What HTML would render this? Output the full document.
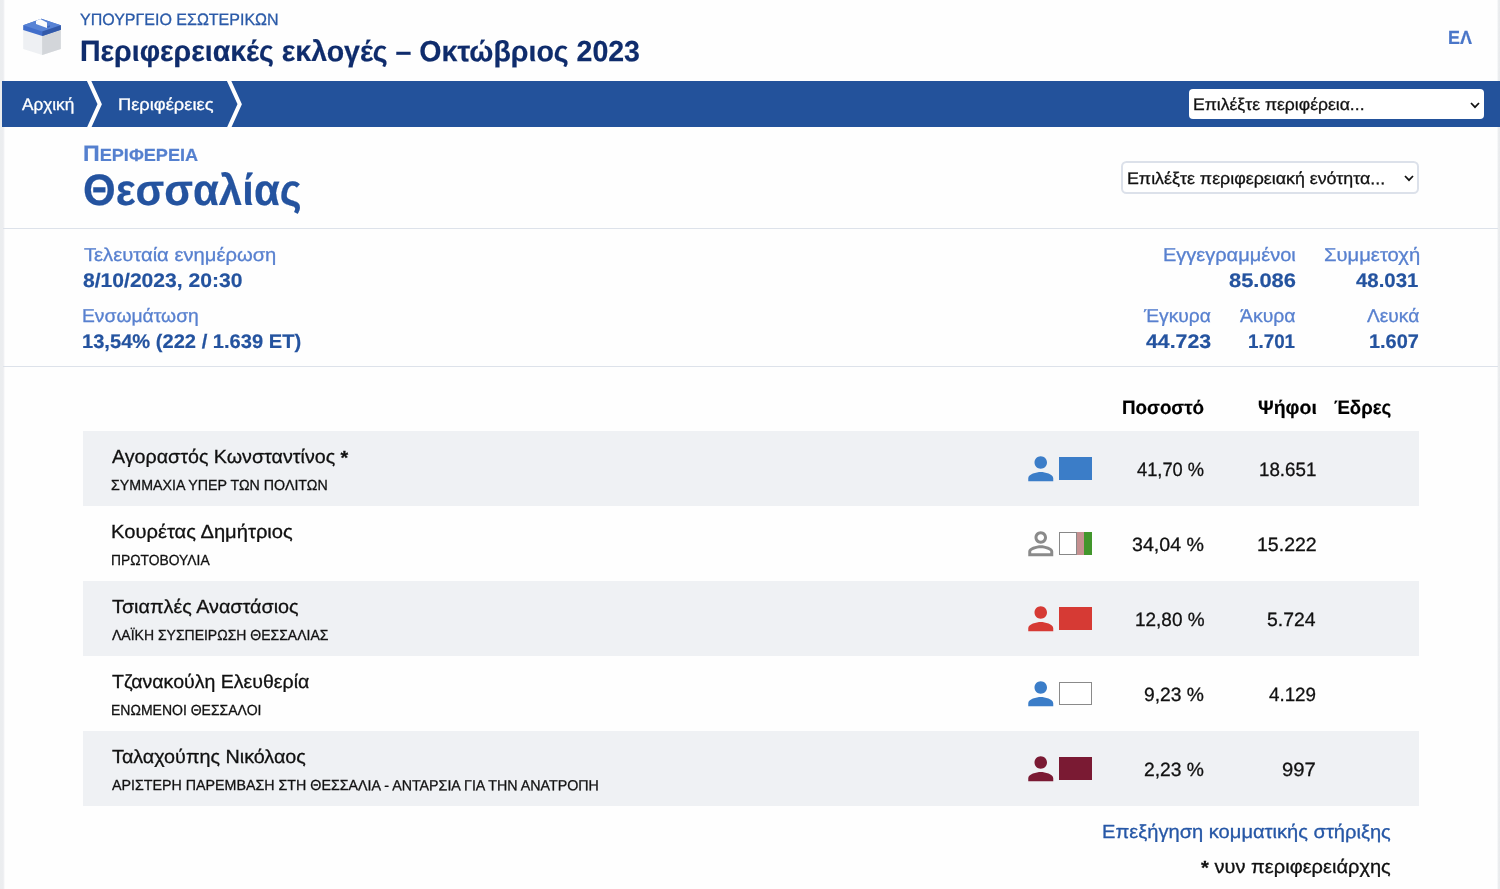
<!DOCTYPE html>
<html lang="el">
<head>
<meta charset="utf-8">
<title>Περιφερειακές εκλογές – Οκτώβριος 2023</title>
<style>
*{box-sizing:border-box;margin:0;padding:0}
html,body{width:1500px;height:889px;overflow:hidden;background:#fefefe}
body{font-family:"Liberation Sans",sans-serif;color:#111;position:relative}
.t{position:absolute;white-space:nowrap;line-height:1;transform-origin:0 0}
.t{-webkit-text-stroke:0.3px currentColor}
.b{font-weight:bold;-webkit-text-stroke:0.2px currentColor}
.edgeL{position:absolute;left:0;top:0;width:5px;height:889px;background:linear-gradient(90deg,#ebedef 0,#ecedf0 3.200px,#fefefe 5px)}
.edgeR{position:absolute;left:1497px;top:0;width:3px;height:889px;background:linear-gradient(90deg,#fefefe 0,#eceef0 1.200px,#e8eaec 3px)}
.nav{position:absolute;left:2px;top:80.500px;width:1498px;height:46.500px;background:#23529b;overflow:hidden}
.sel{position:absolute;background:#fff;border-radius:4px}
.stats{position:absolute;left:3px;top:228px;width:1495px;height:139px;border-top:1px solid #dde2ea;border-bottom:1px solid #dde2ea}
.row{position:absolute;left:83px;width:1336px;height:75px;background:#eff1f4}
.ic{position:absolute;left:1022px;width:37.5px;height:37.5px}
.bx{position:absolute;left:1059.3px;width:33.1px;height:23px}
</style>
</head>
<body>
<div class="edgeL"></div><div class="edgeR"></div>
<svg style="position:absolute;left:20px;top:15px" width="44" height="44" viewBox="20 15 44 44">
<polygon points="23.2,27 60.8,27 60.8,49.100 42.3,55 23.2,48.9" fill="#eef0f3"/>
<polygon points="42.1,33 60.8,27 60.8,49.100 42.3,55 42.1,55" fill="#d3d6da"/>
<polygon points="23.2,25.2 41.4,18.8 60.8,25.2 60.8,29.8 42.3,35.9 23.2,29.9" fill="#416ecb"/>
<polygon points="23.2,25.2 41.4,18.8 60.8,25.2 42.3,31.6" fill="#5883d5"/>
<polygon points="42.3,31.6 60.8,25.2 60.8,29.8 42.3,35.9" fill="#3259a9"/>
<polygon points="47,26.2 50,25.3 50,27 47.5,28" fill="#3c66bd"/>
<polygon points="36,20.8 40.2,19 47,22.6 47,28 36,24" fill="#fbfbfc"/>
</svg>
<div class="nav">
<svg style="position:absolute;left:0;top:0" width="300" height="47" viewBox="0 0 300 47">
<polyline points="86,-2.500 97.7,23.200 86,49" fill="none" stroke="#fefefe" stroke-width="4"/>
<polyline points="226,-2.500 237.7,23.200 226,49" fill="none" stroke="#fefefe" stroke-width="4"/>
</svg>
<div class="sel" style="left:1187px;top:8.500px;width:295px;height:30px">
<svg style="position:absolute;left:281px;top:12.500px" width="10" height="7" viewBox="0 0 10 7"><polyline points="1,1 5,5.2 9,1" fill="none" stroke="#111" stroke-width="1.7"/></svg>
</div>
</div>
<div class="sel" style="left:1121px;top:161px;width:298px;height:33.400px;border:2px solid #dce1ea;border-radius:5.500px">
<svg style="position:absolute;left:280.500px;top:12px" width="10" height="7" viewBox="0 0 10 7"><polyline points="1,1 5,5.2 9,1" fill="none" stroke="#111" stroke-width="1.7"/></svg>
</div>
<div class="stats"></div>
<div class="row" style="top:431px"></div>
<svg class="ic" style="top:449.5px" viewBox="0 0 24 24"><path fill="#3b7dc8" d="M12 12c2.21 0 4-1.79 4-4s-1.79-4-4-4-4 1.79-4 4 1.790 4 4 4zm0 2c-2.670 0-8 1.340-8 4v2h16v-2c0-2.660-5.330-4-8-4z"/></svg>
<div class="bx" style="top:457px;background:#3b7dc8"></div>
<div class="row" style="top:506px;background:transparent"></div>
<svg class="ic" style="top:524.5px" viewBox="0 0 24 24"><path fill="#8a8a8a" d="M12 5.900c1.160 0 2.100.940 2.100 2.100s-.940 2.100-2.100 2.100S9.900 9.160 9.900 8s.940-2.100 2.100-2.100m0 9c2.970 0 6.100 1.460 6.100 2.100v1.100H5.900V17c0-.640 3.130-2.100 6.100-2.100M12 4C9.790 4 8 5.790 8 8s1.790 4 4 4 4-1.790 4-4-1.790-4-4-4zm0 9c-2.670 0-8 1.340-8 4v3h16v-3c0-2.660-5.330-4-8-4z"/></svg>
<div class="bx" style="top:532px;background:linear-gradient(90deg,#fff 0 17.200px,#c59090 17.200px 25px,#42962c 25px 33px)"><div style="position:absolute;left:0;top:0;width:17.700px;height:23px;border:1px solid #888"></div></div>
<div class="row" style="top:581px"></div>
<svg class="ic" style="top:599.5px" viewBox="0 0 24 24"><path fill="#d63a34" d="M12 12c2.21 0 4-1.79 4-4s-1.79-4-4-4-4 1.79-4 4 1.790 4 4 4zm0 2c-2.670 0-8 1.340-8 4v2h16v-2c0-2.660-5.330-4-8-4z"/></svg>
<div class="bx" style="top:607px;background:#d63a34"></div>
<div class="row" style="top:656px;background:transparent"></div>
<svg class="ic" style="top:674.5px" viewBox="0 0 24 24"><path fill="#3b7dc8" d="M12 12c2.21 0 4-1.79 4-4s-1.79-4-4-4-4 1.79-4 4 1.790 4 4 4zm0 2c-2.670 0-8 1.340-8 4v2h16v-2c0-2.660-5.330-4-8-4z"/></svg>
<div class="bx" style="top:682px;background:#fff;border:1px solid #8a8a8a"></div>
<div class="row" style="top:731px"></div>
<svg class="ic" style="top:749.5px" viewBox="0 0 24 24"><path fill="#7a1a33" d="M12 12c2.21 0 4-1.79 4-4s-1.79-4-4-4-4 1.79-4 4 1.790 4 4 4zm0 2c-2.670 0-8 1.340-8 4v2h16v-2c0-2.660-5.330-4-8-4z"/></svg>
<div class="bx" style="top:757px;background:#7a1a33"></div>
<div style="position:absolute;left:0;top:0;width:1500px;height:889px;will-change:transform">
<div class="t" id="t1" style="left:80.28px;top:11.4px;font-size:16.5px;color:#2a5aa8;transform:rotate(0.03deg) scaleX(0.9698)">ΥΠΟΥΡΓΕΙΟ ΕΣΩΤΕΡΙΚΩΝ</div>
<div class="t b" id="t2" style="left:79.85px;top:35.5px;font-size:29.3px;color:#0f2c6c;transform:rotate(0.03deg) scaleX(0.9732)">Περιφερειακές εκλογές – Οκτώβριος 2023</div>
<div class="t b" id="t3" style="left:1448.14px;top:28.1px;font-size:19px;color:#4a76c8;transform:rotate(0.03deg) scaleX(0.9465)">ΕΛ</div>
<div class="t" id="n1" style="left:21.9px;top:97.0px;font-size:16.8px;color:#fff;transform:rotate(0.03deg) scaleX(1.024)">Αρχική</div>
<div class="t" id="n2" style="left:117.95px;top:97.0px;font-size:16.8px;color:#fff;transform:rotate(0.03deg) scaleX(1.0903)">Περιφέρειες</div>
<div class="t" id="s1" style="left:1193.3px;top:97.3px;font-size:16.8px;color:#111;transform:rotate(0.03deg) scaleX(1.0472)">Επιλέξτε περιφέρεια...</div>
<div class="t" id="s2" style="left:1126.78px;top:170.8px;font-size:16.8px;color:#111;transform:rotate(0.03deg) scaleX(1.0614)">Επιλέξτε περιφερειακή ενότητα...</div>
<div class="t b" id="r1" style="left:82.82px;top:142.8px;font-size:22.3px;color:#5580cf;transform:rotate(0.03deg) scaleX(1.0354)">Π<span style="font-size:17.5px">ΕΡΙΦΕΡΕΙΑ</span></div>
<div class="t b" id="r2" style="left:82.81px;top:168.4px;font-size:44px;color:#24539f;transform:rotate(0.03deg) scaleX(0.9545)">Θεσσαλίας</div>
<div class="t" id="a1" style="left:83.54px;top:245.8px;font-size:18.7px;color:#5880cf;transform:rotate(0.03deg) scaleX(1.0809)">Τελευταία ενημέρωση</div>
<div class="t b" id="a2" style="left:82.99px;top:270.6px;font-size:19.7px;color:#24539f;transform:rotate(0.03deg) scaleX(1.071)">8/10/2023, 20:30</div>
<div class="t" id="a3" style="left:82.18px;top:307.0px;font-size:18.7px;color:#5880cf;transform:rotate(0.03deg) scaleX(1.0323)">Ενσωμάτωση</div>
<div class="t b" id="a4" style="left:82.34px;top:332.4px;font-size:19.7px;color:#24539f;transform:rotate(0.03deg) scaleX(1.0217)">13,54% (222 / 1.639 ΕΤ)</div>
<div class="t" id="b1" style="left:1162.82px;top:245.8px;font-size:18.7px;color:#5880cf;transform:rotate(0.03deg) scaleX(1.0701)">Εγγεγραμμένοι</div>
<div class="t b" id="b2" style="left:1228.86px;top:270.6px;font-size:19.7px;color:#24539f;transform:rotate(0.03deg) scaleX(1.1114)">85.086</div>
<div class="t" id="b3" style="left:1323.52px;top:245.8px;font-size:18.7px;color:#5880cf;transform:rotate(0.03deg) scaleX(1.0823)">Συμμετοχή</div>
<div class="t b" id="b4" style="left:1356.45px;top:270.6px;font-size:19.7px;color:#24539f;transform:rotate(0.03deg) scaleX(1.0365)">48.031</div>
<div class="t" id="b5" style="left:1144.2px;top:307.0px;font-size:18.7px;color:#5880cf;transform:rotate(0.03deg) scaleX(1.029)">Έγκυρα</div>
<div class="t b" id="b6" style="left:1146.24px;top:332.4px;font-size:19.7px;color:#24539f;transform:rotate(0.03deg) scaleX(1.0814)">44.723</div>
<div class="t" id="b7" style="left:1239.8px;top:307.0px;font-size:18.7px;color:#5880cf;transform:rotate(0.03deg) scaleX(1.0377)">Άκυρα</div>
<div class="t b" id="b8" style="left:1248.33px;top:332.4px;font-size:19.7px;color:#24539f;transform:rotate(0.03deg) scaleX(0.9549)">1.701</div>
<div class="t" id="b9" style="left:1366.8px;top:307.0px;font-size:18.7px;color:#5880cf;transform:rotate(0.03deg) scaleX(1.0252)">Λευκά</div>
<div class="t b" id="b10" style="left:1369.45px;top:332.4px;font-size:19.7px;color:#24539f;transform:rotate(0.03deg) scaleX(1.0128)">1.607</div>
<div class="t b" id="h1" style="left:1121.91px;top:397.5px;font-size:19.4px;color:#000;transform:rotate(0.03deg) scaleX(0.969)">Ποσοστό</div>
<div class="t b" id="h2" style="left:1257.5px;top:397.5px;font-size:19.4px;color:#000;transform:rotate(0.03deg) scaleX(1.0035)">Ψήφοι</div>
<div class="t b" id="h3" style="left:1334.08px;top:397.5px;font-size:19.4px;color:#000;transform:rotate(0.03deg) scaleX(0.96)">Έδρες</div>
<div class="t" id="f1" style="left:1101.83px;top:823.0px;font-size:18.9px;color:#2657a6;transform:rotate(0.03deg) scaleX(1.0641)">Επεξήγηση κομματικής στήριξης</div>
<div class="t" id="f2" style="left:1201.2px;top:858.2px;font-size:18.9px;color:#111;transform:rotate(0.03deg) scaleX(1.0618)"><span style="font-weight:bold;position:relative;top:1px">*</span> νυν περιφερειάρχης</div>
<div class="t" id="nm0" style="left:111.5px;top:447.7px;font-size:18.9px;color:#111;transform:rotate(0.03deg) scaleX(1.041)">Αγοραστός Κωνσταντίνος <span style="font-weight:bold;position:relative;top:1px">*</span></div>
<div class="t" id="pt0" style="left:111.35px;top:477.5px;font-size:14.6px;color:#111;transform:rotate(0.03deg) scaleX(0.9749)">ΣΥΜΜΑΧΙΑ ΥΠΕΡ ΤΩΝ ΠΟΛΙΤΩΝ</div>
<div class="t" id="pc0" style="left:1137.18px;top:459.6px;font-size:19.3px;color:#111;transform:rotate(0.03deg) scaleX(0.9474)">41,70 %</div>
<div class="t" id="vt0" style="left:1258.9px;top:459.6px;font-size:19.3px;color:#111;transform:rotate(0.03deg) scaleX(0.9724)">18.651</div>
<div class="t" id="nm1" style="left:111.32px;top:522.7px;font-size:18.9px;color:#111;transform:rotate(0.03deg) scaleX(1.0673)">Κουρέτας Δημήτριος</div>
<div class="t" id="pt1" style="left:110.74px;top:552.5px;font-size:14.6px;color:#111;transform:rotate(0.03deg) scaleX(0.9487)">ΠΡΩΤΟΒΟΥΛΙΑ</div>
<div class="t" id="pc1" style="left:1132.32px;top:534.6px;font-size:19.3px;color:#111;transform:rotate(0.03deg) scaleX(1.0168)">34,04 %</div>
<div class="t" id="vt1" style="left:1256.55px;top:534.6px;font-size:19.3px;color:#111;transform:rotate(0.03deg) scaleX(1.0129)">15.222</div>
<div class="t" id="nm2" style="left:111.85px;top:597.7px;font-size:18.9px;color:#111;transform:rotate(0.03deg) scaleX(1.0466)">Τσιαπλές Αναστάσιος</div>
<div class="t" id="pt2" style="left:112.0px;top:627.5px;font-size:14.6px;color:#111;transform:rotate(0.03deg) scaleX(0.9591)">ΛΑΪΚΗ ΣΥΣΠΕΙΡΩΣΗ ΘΕΣΣΑΛΙΑΣ</div>
<div class="t" id="pc2" style="left:1134.69px;top:609.6px;font-size:19.3px;color:#111;transform:rotate(0.03deg) scaleX(0.983)">12,80 %</div>
<div class="t" id="vt2" style="left:1267.43px;top:609.6px;font-size:19.3px;color:#111;transform:rotate(0.03deg) scaleX(1.0043)">5.724</div>
<div class="t" id="nm3" style="left:111.86px;top:672.7px;font-size:18.9px;color:#111;transform:rotate(0.03deg) scaleX(1.0344)">Τζανακούλη Ελευθερία</div>
<div class="t" id="pt3" style="left:110.72px;top:702.5px;font-size:14.6px;color:#111;transform:rotate(0.03deg) scaleX(0.9597)">ΕΝΩΜΕΝΟΙ ΘΕΣΣΑΛΟΙ</div>
<div class="t" id="pc3" style="left:1144.2px;top:684.6px;font-size:19.3px;color:#111;transform:rotate(0.03deg) scaleX(0.9994)">9,23 %</div>
<div class="t" id="vt3" style="left:1269.18px;top:684.6px;font-size:19.3px;color:#111;transform:rotate(0.03deg) scaleX(0.9745)">4.129</div>
<div class="t" id="nm4" style="left:111.85px;top:747.7px;font-size:18.9px;color:#111;transform:rotate(0.03deg) scaleX(1.0451)">Ταλαχούπης Νικόλαος</div>
<div class="t" id="pt4" style="left:112.0px;top:777.5px;font-size:14.6px;color:#111;transform:rotate(0.03deg) scaleX(0.9768)">ΑΡΙΣΤΕΡΗ ΠΑΡΕΜΒΑΣΗ ΣΤΗ ΘΕΣΣΑΛΙΑ - ΑΝΤΑΡΣΙΑ ΓΙΑ ΤΗΝ ΑΝΑΤΡΟΠΗ</div>
<div class="t" id="pc4" style="left:1144.2px;top:759.6px;font-size:19.3px;color:#111;transform:rotate(0.03deg) scaleX(0.9994)">2,23 %</div>
<div class="t" id="vt4" style="left:1282.45px;top:759.6px;font-size:19.3px;color:#111;transform:rotate(0.03deg) scaleX(1.0484)">997</div>
</div>
</body>
</html>
